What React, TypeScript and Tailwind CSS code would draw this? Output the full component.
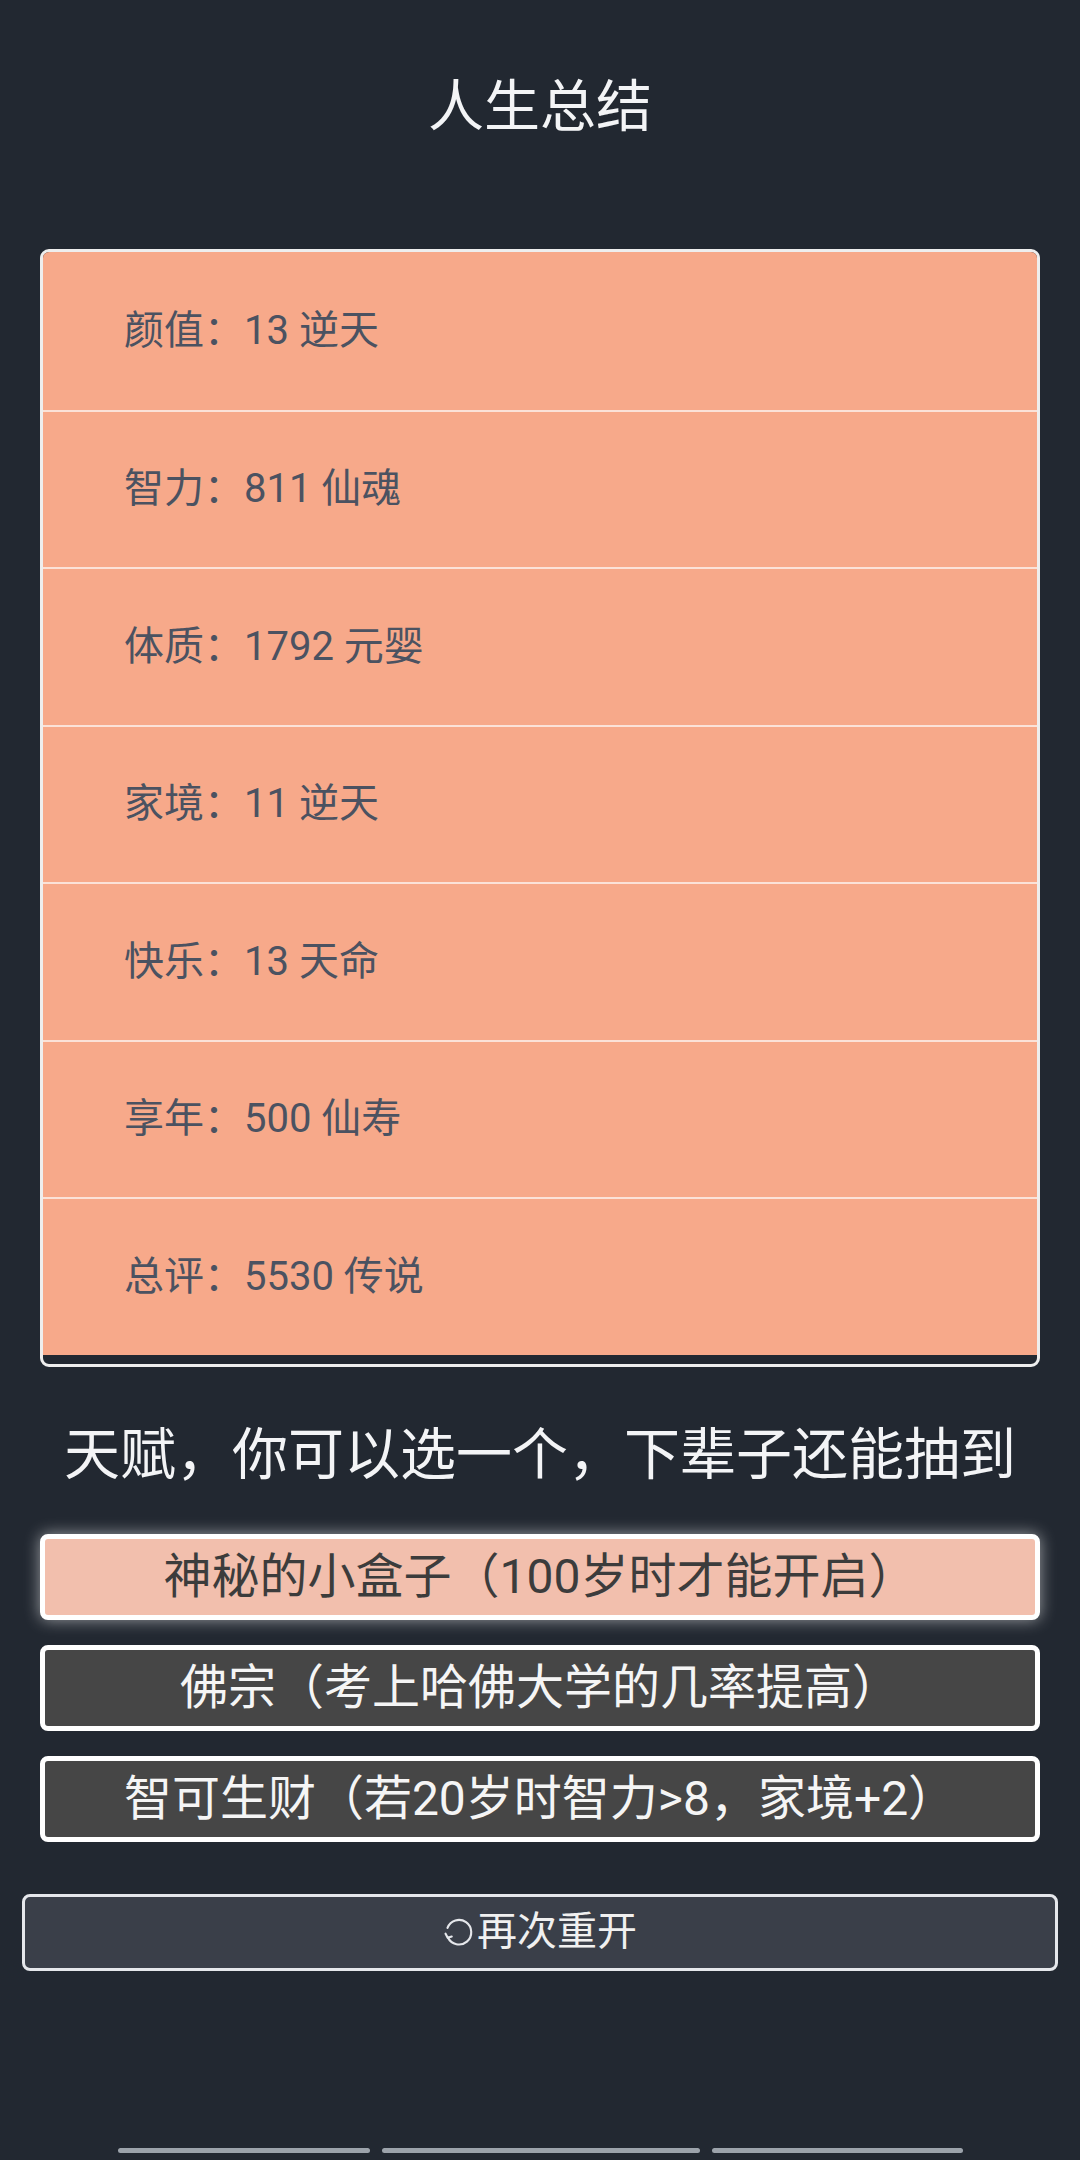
import React from "react";

const stats = [
  "颜值：13 逆天",
  "智力：811 仙魂",
  "体质：1792 元婴",
  "家境：11 逆天",
  "快乐：13 天命",
  "享年：500 仙寿",
  "总评：5530 传说",
];

const talents = [
  { text: "神秘的小盒子（100岁时才能开启）", picked: true },
  { text: "佛宗（考上哈佛大学的几率提高）", picked: false },
  { text: "智可生财（若20岁时智力>8，家境+2）", picked: false },
];

function RestartIcon() {
  return (
    <svg width="32" height="32" viewBox="0 0 30 30" fill="none" className="mr-[2px]">
      <path
        d="M4.2 11.2 A11.5 11.5 0 1 1 4.6 20.2"
        stroke="#e5e7eb"
        strokeWidth="2"
        strokeLinecap="round"
      />
      <path
        d="M2.4 16.6 L4.4 20.4 L8.2 19.2"
        stroke="#e5e7eb"
        strokeWidth="2"
        strokeLinecap="round"
        strokeLinejoin="round"
      />
    </svg>
  );
}

export default function App() {
  return (
    <div className="flex min-h-[2160px] flex-col bg-[#222831] font-['Roboto','Noto_Sans_CJK_SC',sans-serif]">
      <h1 className="pt-[65px] text-center text-[56px] leading-[84px] font-normal text-[#f3f4f6]">
        人生总结
      </h1>

      <div className="mx-[40px] mt-[100px] overflow-hidden rounded-[9px] border-[3px] border-[#eeeeee] pb-[9px]">
        {stats.map((s, i) => (
          <div
            key={s}
            className={
              "flex h-[157.5px] items-center bg-[#f7a98a] pl-[81px] text-[40px] text-[#4b5261]" +
              (i > 0 ? " border-t-2 border-[#fbe2d8]" : "")
            }
          >
            {s}
          </div>
        ))}
      </div>

      <p className="mt-[46px] text-center text-[56px] leading-[84px] text-[#f3f4f6]">
        天赋，你可以选一个，下辈子还能抽到
      </p>

      <div className="mx-[40px] mt-[37px] flex flex-col gap-[25px]">
        {talents.map((t) => (
          <div
            key={t.text}
            className={
              t.picked
                ? "flex h-[86px] items-center justify-center rounded-[8px] border-[5px] border-white bg-[#f2bfad] text-[48px] text-[#3c3c3c] shadow-[0_0_16px_rgba(255,255,255,0.55)]"
                : "flex h-[86px] items-center justify-center rounded-[8px] border-[5px] border-white bg-[#464646] text-[48px] text-[#f5f5f5]"
            }
          >
            {t.text}
          </div>
        ))}
      </div>

      <button className="mx-[22px] mt-[52px] flex h-[77px] items-center justify-center rounded-[8px] border-[3px] border-[#e5e7eb] bg-[#3a3f49] text-[40px] text-[#f0f0f0]">
        <RestartIcon />
        再次重开
      </button>

      <div className="mt-auto flex justify-center gap-[12px] pb-[7px]">
        <div className="h-[5px] w-[252px] rounded-full bg-[#9ca3ab]" />
        <div className="h-[5px] w-[318px] rounded-full bg-[#9ca3ab]" />
        <div className="h-[5px] w-[251px] rounded-full bg-[#9ca3ab]" />
      </div>
    </div>
  );
}
